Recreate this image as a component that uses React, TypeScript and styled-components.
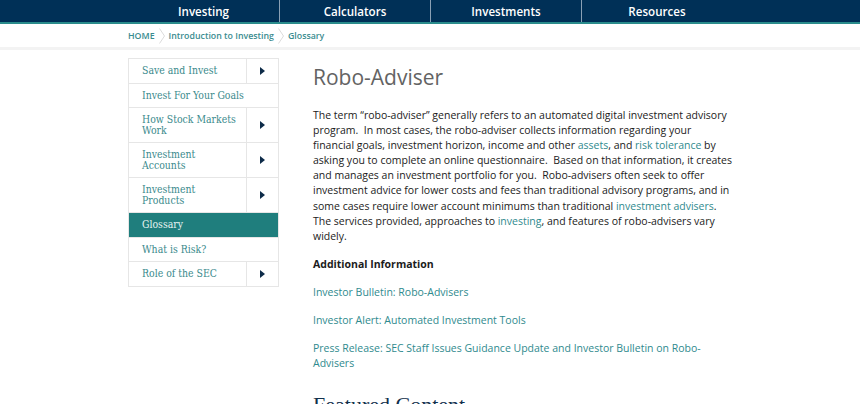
import styled, { createGlobalStyle } from "styled-components";

const GlobalStyle = createGlobalStyle`
  html, body {
    margin: 0;
    padding: 0;
    background: #fff;
  }
  body {
    font-family: "Open Sans", "Liberation Sans", Arial, sans-serif;
    overflow: hidden;
  }
  * {
    box-sizing: border-box;
  }
`;

const navItems = ["Investing", "Calculators", "Investments", "Resources"];

const sideItems: { label: string; sub?: boolean; active?: boolean }[] = [
  { label: "Save and Invest", sub: true },
  { label: "Invest For Your Goals" },
  { label: "How Stock Markets Work", sub: true },
  { label: "Investment Accounts", sub: true },
  { label: "Investment Products", sub: true },
  { label: "Glossary", active: true },
  { label: "What is Risk?" },
  { label: "Role of the SEC", sub: true },
];

const Caret = () => (
  <svg width="5" height="8" viewBox="0 0 5 8">
    <path d="M0 0 L5 4 L0 8 Z" fill="#0d2b48" />
  </svg>
);

const Chevron = () => (
  <svg width="6" height="16" viewBox="0 0 6 16">
    <path d="M0.5 0.5 L5.5 8 L0.5 15.5" fill="none" stroke="#dcdcdc" strokeWidth="1" />
  </svg>
);

const App = () => {
  return (
    <>
      <GlobalStyle />
      <NavBar>
        <NavInner>
          {navItems.map((item, i) => (
            <NavItem key={item} $first={i === 0}>
              {item}
            </NavItem>
          ))}
        </NavInner>
      </NavBar>
      <Crumbs>
        <CrumbsInner>
          <Crumb>HOME</Crumb>
          <Chevron />
          <Crumb>Introduction to Investing</Crumb>
          <Chevron />
          <Crumb>Glossary</Crumb>
        </CrumbsInner>
      </Crumbs>
      <Main>
        <SideNav>
          {sideItems.map((item) => (
            <SideRow key={item.label} $active={item.active}>
              <SideLabel $active={item.active} $sub={item.sub}>
                {item.label}
              </SideLabel>
              {item.sub && (
                <SideToggle>
                  <Caret />
                </SideToggle>
              )}
            </SideRow>
          ))}
        </SideNav>
        <Content>
          <Title>Robo-Adviser</Title>
          <Para>
            The term “robo-adviser” generally refers to an automated digital investment advisory
            program.&nbsp; In most cases, the robo-adviser collects information regarding your
            financial goals, investment horizon, income and other <Link>assets</Link>, and{" "}
            <Link>risk tolerance</Link> by asking you to complete an online questionnaire.&nbsp;
            Based on that information, it creates and manages an investment portfolio for
            you.&nbsp; Robo-advisers often seek to offer investment advice for lower costs and fees
            than traditional advisory programs, and in some cases require lower account minimums
            than traditional <Link>investment advisers</Link>. The services provided, approaches
            to <Link>investing</Link>, and features of robo-advisers vary widely.
          </Para>
          <SubHead>Additional Information</SubHead>
          <Para>
            <Link>Investor Bulletin: Robo-Advisers</Link>
          </Para>
          <Para>
            <Link>Investor Alert: Automated Investment Tools</Link>
          </Para>
          <Para>
            <Link>
              Press Release: SEC Staff Issues Guidance Update and Investor Bulletin on
              Robo-Advisers
            </Link>
          </Para>
          <Featured>Featured Content</Featured>
        </Content>
      </Main>
    </>
  );
};

export default App;

const NavBar = styled.div`
  background: #003057;
  border-bottom: 2px solid #2a8c8c;
`;

const NavInner = styled.nav`
  width: 604px;
  margin: 0 auto;
  display: grid;
  grid-template-columns: repeat(4, 1fr);
`;

const NavItem = styled.div<{ $first?: boolean }>`
  height: 22px;
  display: flex;
  align-items: center;
  justify-content: center;
  color: #fff;
  font-size: 11.6px;
  font-weight: 600;
  border-left: ${(p) => (p.$first ? "none" : "1px solid #8aa0b5")};
`;

const Crumbs = styled.div`
  border-bottom: 3px solid #f3f3f3;
`;

const CrumbsInner = styled.div`
  width: 604px;
  margin: 0 auto;
  height: 23px;
  display: flex;
  align-items: center;
  gap: 4px;
`;

const Crumb = styled.span`
  color: #3a8c8f;
  font-size: 8.8px;
  font-weight: 600;
`;

const Main = styled.div`
  width: 604px;
  margin: 0 auto;
  padding-top: 8px;
  display: flex;
  gap: 34px;
  align-items: flex-start;
`;

const SideNav = styled.ul`
  list-style: none;
  margin: 0;
  padding: 0;
  width: 151px;
  flex-shrink: 0;
  border: 1px solid #e6e6e6;
  border-bottom: none;
`;

const SideRow = styled.li<{ $active?: boolean }>`
  display: flex;
  align-items: stretch;
  min-height: 24.5px;
  border-bottom: 1px solid #e6e6e6;
  background: ${(p) => (p.$active ? "#1f7e7d" : "#fff")};
`;

const SideLabel = styled.span<{ $active?: boolean; $sub?: boolean }>`
  flex: 1;
  display: flex;
  align-items: center;
  padding: 6px ${(p) => (p.$sub ? "8px" : "6px")} 6px 13px;
  font-family: "DejaVu Serif Condensed", "DejaVu Serif", serif;
  font-size: 10.4px;
  line-height: 11px;
  color: ${(p) => (p.$active ? "#e8f4f3" : "#3a8a8c")};
`;

const SideToggle = styled.span`
  width: 32px;
  flex-shrink: 0;
  display: flex;
  align-items: center;
  justify-content: center;
  border-left: 1px solid #e6e6e6;
`;

const Content = styled.main`
  flex: 1;
  min-width: 0;
`;

const Title = styled.h1`
  margin: 4px 0 16px;
  font-size: 21px;
  font-weight: 400;
  line-height: 30px;
  color: #636363;
`;

const Para = styled.p`
  margin: 0 0 13px;
  font-size: 10.5px;
  line-height: 15.1px;
  color: #1b1b1b;
`;

const Link = styled.a`
  color: #2f8a8e;
  text-decoration: none;
`;

const SubHead = styled.h3`
  margin: 0 0 13px;
  font-size: 10.5px;
  line-height: 15.1px;
  font-weight: 700;
  color: #1b1b1b;
`;

const Featured = styled.h2`
  margin: 21px 0 0;
  font-family: "Liberation Serif", "Times New Roman", serif;
  font-size: 22px;
  font-weight: 400;
  color: #12304d;
`;
